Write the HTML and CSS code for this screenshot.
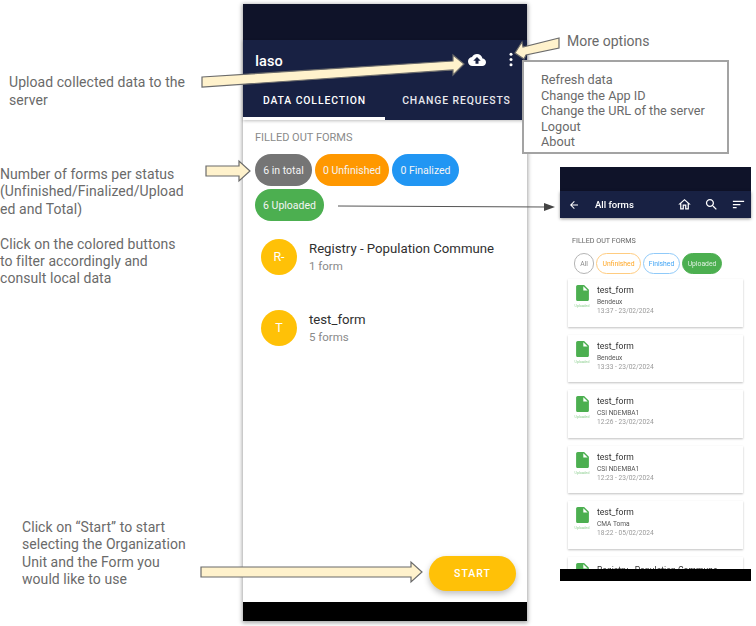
FILE: index.html
```html
<!DOCTYPE html>
<html lang="en">
<head>
<meta charset="utf-8">
<title>Iaso data collection</title>
<link rel="stylesheet" href="styles.css">
</head>
<body>
<main class="canvas">
  <p class="note note-upload">Upload collected data to the<br>server</p>
  <div class="note note-status">
    <p>Number of forms per status<br>(Unfinished/Finalized/Upload<br>ed and Total)</p>
    <p class="gap">Click on the colored buttons<br>to filter accordingly and<br>consult local data</p>
  </div>
  <p class="note note-start">Click on “Start” to start<br>selecting the Organization<br>Unit and the Form you<br>would like to use</p>
  <p class="note note-more">More options</p>

  <section class="phone">
    <div class="status"></div>
    <header class="appbar">
      <div class="bar-row">
        <span class="app-title">Iaso</span>
        <svg class="ic-cloud" viewBox="0 0 24 24"><path d="M19.35 10.04C18.67 6.59 15.64 4 12 4 9.11 4 6.6 5.64 5.35 8.04 2.34 8.36 0 10.91 0 14c0 3.31 2.69 6 6 6h13c2.76 0 5-2.24 5-5 0-2.64-2.05-4.78-4.65-4.96zM14 13v4h-4v-4H7l5-5 5 5h-3z"/></svg>
        <svg class="ic-kebab" viewBox="0 0 6 16"><circle cx="3" cy="2.5" r="1.6"/><circle cx="3" cy="8" r="1.6"/><circle cx="3" cy="13.5" r="1.6"/></svg>
      </div>
      <nav class="tabs">
        <span class="tab active">DATA COLLECTION</span>
        <span class="tab">CHANGE REQUESTS</span>
      </nav>
    </header>
    <div class="content">
      <h2 class="section">FILLED OUT FORMS</h2>
      <div class="chips">
        <span class="chip grey">6 in total</span>
        <span class="chip orange">0 Unfinished</span>
        <span class="chip blue">0 Finalized</span>
        <span class="chip green">6 Uploaded</span>
      </div>
      <ul class="forms">
        <li class="form"><span class="avatar">R-</span><div><div class="form-name">Registry - Population Commune</div><div class="form-count">1 form</div></div></li>
        <li class="form"><span class="avatar">T</span><div><div class="form-name">test_form</div><div class="form-count">5 forms</div></div></li>
      </ul>
      <button class="fab">START</button>
    </div>
    <div class="navbar"></div>
  </section>

  <section class="mini">
    <div class="mini-status"></div>
    <header class="mini-bar">
      <svg class="mi back" viewBox="0 0 24 24"><path d="M20 11H7.83l5.59-5.59L12 4l-8 8 8 8 1.41-1.41L7.83 13H20v-2z"/></svg>
      <span class="mini-title">All forms</span>
      <svg class="mi" viewBox="0 0 24 24"><path d="M12 5.69l5 4.5V18h-2v-6H9v6H7v-7.81l5-4.5M12 3L2 12h3v8h6v-6h2v6h6v-8h3L12 3z"/></svg>
      <svg class="mi" viewBox="0 0 24 24"><path d="M15.5 14h-.79l-.28-.27C15.41 12.59 16 11.11 16 9.5 16 5.91 13.09 3 9.5 3S3 5.91 3 9.5 5.91 16 9.5 16c1.61 0 3.09-.59 4.23-1.57l.27.28v.79l5 4.99L20.49 19l-4.99-5zm-6 0C7.01 14 5 11.99 5 9.5S7.01 5 9.5 5 14 7.01 14 9.5 11.99 14 9.5 14z"/></svg>
      <svg class="mi" viewBox="0 0 24 24"><path d="M3 18h6v-2H3v2zM3 6v2h18V6H3zm0 7h12v-2H3v2z"/></svg>
    </header>
    <div class="mini-body">
      <h3 class="mini-section">FILLED OUT FORMS</h3>
      <div class="mini-chips">
        <span class="mchip m-all">All</span>
        <span class="mchip m-unf">Unfinished</span>
        <span class="mchip m-fin">Finished</span>
        <span class="mchip m-upl">Uploaded</span>
      </div>
      <div class="cards">
        <article class="card"><div class="file"><svg viewBox="4 2 16 20"><path d="M6 2c-1.1 0-1.99.9-1.99 2L4 20c0 1.1.89 2 1.99 2H18c1.1 0 2-.9 2-2V8l-6-6H6zm7 7V3.5L18.5 9H13z"/></svg><span>Uploaded</span></div><div><div class="c-name">test_form</div><div class="c-org">Bendeux</div><div class="c-date">13:37 - 23/02/2024</div></div></article>
        <article class="card"><div class="file"><svg viewBox="4 2 16 20"><path d="M6 2c-1.1 0-1.99.9-1.99 2L4 20c0 1.1.89 2 1.99 2H18c1.1 0 2-.9 2-2V8l-6-6H6zm7 7V3.5L18.5 9H13z"/></svg><span>Uploaded</span></div><div><div class="c-name">test_form</div><div class="c-org">Bendeux</div><div class="c-date">13:33 - 23/02/2024</div></div></article>
        <article class="card"><div class="file"><svg viewBox="4 2 16 20"><path d="M6 2c-1.1 0-1.99.9-1.99 2L4 20c0 1.1.89 2 1.99 2H18c1.1 0 2-.9 2-2V8l-6-6H6zm7 7V3.5L18.5 9H13z"/></svg><span>Uploaded</span></div><div><div class="c-name">test_form</div><div class="c-org">CSI NDEMBA1</div><div class="c-date">12:26 - 23/02/2024</div></div></article>
        <article class="card"><div class="file"><svg viewBox="4 2 16 20"><path d="M6 2c-1.1 0-1.99.9-1.99 2L4 20c0 1.1.89 2 1.99 2H18c1.1 0 2-.9 2-2V8l-6-6H6zm7 7V3.5L18.5 9H13z"/></svg><span>Uploaded</span></div><div><div class="c-name">test_form</div><div class="c-org">CSI NDEMBA1</div><div class="c-date">12:23 - 23/02/2024</div></div></article>
        <article class="card"><div class="file"><svg viewBox="4 2 16 20"><path d="M6 2c-1.1 0-1.99.9-1.99 2L4 20c0 1.1.89 2 1.99 2H18c1.1 0 2-.9 2-2V8l-6-6H6zm7 7V3.5L18.5 9H13z"/></svg><span>Uploaded</span></div><div><div class="c-name">test_form</div><div class="c-org">CMA Toma</div><div class="c-date">18:22 - 05/02/2024</div></div></article>
        <article class="card card-cut"><div class="file"><svg viewBox="4 2 16 20"><path d="M6 2c-1.1 0-1.99.9-1.99 2L4 20c0 1.1.89 2 1.99 2H18c1.1 0 2-.9 2-2V8l-6-6H6zm7 7V3.5L18.5 9H13z"/></svg></div><div><div class="c-name">Registry - Population Commune</div></div></article>
      </div>
    </div>
    <div class="mini-nav"></div>
  </section>

  <aside class="menu">
    <div>Refresh data</div>
    <div>Change the App ID</div>
    <div>Change the URL of the server</div>
    <div>Logout</div>
    <div>About</div>
  </aside>

  <svg class="arrows" viewBox="0 0 756 626">
    <polygon class="callout" points="202,77 453,61 453,55 464,64 453,75 453,70 202,87"/>
    <polygon class="callout" points="559,38 523,47 522,42 515,53 524,59 526,55 559,48"/>
    <polygon class="callout" points="206,166 239,166 239,161 250,171 239,181 239,176 206,176"/>
    <polygon class="callout" points="201,567 411,567 411,562 422,572 411,582 411,577 201,577"/>
    <line class="pointer" x1="338" y1="206" x2="546" y2="207"/>
    <polygon class="pointer-head" points="555,207 544,203 544,211"/>
  </svg>
</main>
</body>
</html>
```
FILE: styles.css
```css
* { box-sizing: border-box; }
html, body { margin: 0; padding: 0; background: #fff; }
p, h2, h3, ul { margin: 0; padding: 0; }
.canvas { position: relative; width: 756px; height: 626px; overflow: hidden; font-family: Roboto, "Liberation Sans", sans-serif; }

/* Annotations */
.note { position: absolute; color: #6a6a6a; font-size: 14px; line-height: 17.4px; letter-spacing: .06px; font-family: Roboto, sans-serif; }
.note-upload { left: 9px; top: 73px; line-height: 18px; }
.note-status { left: 0; top: 166px; width: 190px; }
.note-status .gap { margin-top: 17.4px; }
.note-start { left: 22px; top: 519px; }
.note-more { left: 567px; top: 33px; letter-spacing: 0; }

/* Main phone */
.phone { position: absolute; left: 243px; top: 4px; width: 284px; height: 617px; display: flex; flex-direction: column; background: #fff; box-shadow: 0 1px 4px 1px rgba(0,0,0,.35); }
.status { height: 36px; background: #0f1329; flex: none; }
.appbar { height: 80px; flex: none; background: #182143; color: #fff; display: flex; flex-direction: column; justify-content: flex-end; box-shadow: 0 1px 3px rgba(0,0,0,.25); position: relative; }
.bar-row { display: flex; align-items: center; height: 40px; padding: 3px 12px 0 12px; }
.app-title { font-size: 14.5px; font-weight: 500; flex: 1; }
.ic-cloud { width: 18px; height: 18px; fill: #fff; margin-right: 22px; position: relative; top: -2px; }
.ic-kebab { width: 6px; height: 15px; fill: #fff; margin-right: 1px; position: relative; top: -2px; }
.tabs { display: flex; height: 40px; }
.tab { font-size: 10.4px; font-weight: 500; letter-spacing: .9px; display: flex; align-items: center; justify-content: center; width: 142px; white-space: nowrap; color: #e8e9ee; padding-left: 1px; }
.tab.active { box-shadow: inset 0 -3px 0 #fff; color: #fff; }
.content { flex: 1; position: relative; padding: 11px 12px 0; }
.section { font-size: 11px; font-weight: 400; color: #8a8a8a; line-height: 13px; }
.chips { display: flex; flex-wrap: wrap; gap: 3px; margin-top: 10px; }
.chip { height: 32px; border-radius: 16px; color: #f4f4f4; font-size: 10.5px; display: flex; align-items: center; justify-content: center; white-space: nowrap; }
.grey { background: #757575; width: 57px; }
.orange { background: #ff9800; width: 74px; }
.blue { background: #2196f3; width: 67px; }
.green { background: #4caf50; width: 69px; }
.forms { list-style: none; margin-top: 0; }
.form { display: flex; align-items: center; gap: 12px; height: 71px; padding-left: 6px; }
.avatar { width: 36px; height: 36px; border-radius: 50%; background: #ffc107; color: #fff; font-size: 12.5px; display: flex; align-items: center; justify-content: center; flex: none; }
.form-name { font-size: 13.2px; line-height: 18px; color: #303030; }
.form-count { font-size: 11.5px; line-height: 16px; color: #8a8a8a; }
.fab { position: absolute; left: 186px; top: 436px; width: 87px; height: 35px; border: 0; border-radius: 18px; background: #ffc107; color: #fff; font: 500 10.5px Roboto, sans-serif; letter-spacing: 1px; box-shadow: 0 3px 6px rgba(0,0,0,.25); }
.navbar { height: 19px; background: #000; flex: none; }

/* Small screenshot */
.mini { position: absolute; left: 560px; top: 167px; width: 191px; height: 414px; display: flex; flex-direction: column; filter: blur(.35px); background: #fff; }
.mini-status { height: 24px; background: #0f1329; flex: none; }
.mini-bar { height: 27px; flex: none; background: #182143; color: #fff; display: flex; align-items: center; gap: 12px; padding: 0 5px 0 8px; box-shadow: 0 1px 3px rgba(0,0,0,.4); position: relative; }
.mini-title { font-size: 9.5px; font-weight: 500; flex: 1; margin-left: 3px; }
.mi { width: 15px; height: 15px; fill: #fff; flex: none; }
.mi.back { width: 12px; height: 12px; }
.mini-body { flex: 1; overflow: hidden; padding: 0 8px; }
.mini-section { font-size: 7.2px; font-weight: 400; color: #666; margin: 18px 0 0 4px; line-height: 10px; }
.mini-chips { display: flex; gap: 2px; margin: 7px 0 0 6px; }
.mchip { height: 21px; border-radius: 11px; font-size: 6.8px; display: flex; align-items: center; justify-content: center; border: 1px solid; white-space: nowrap; }
.m-all { width: 20px; color: #8a8a8a; border-color: #b5b5b5; }
.m-unf { width: 45px; color: #ffa726; border-color: #ffcc80; }
.m-fin { width: 37px; color: #42a5f5; border-color: #90caf9; }
.m-upl { width: 40px; color: #dff0e0; background: #4caf50; border-color: #4caf50; }
.cards { display: flex; flex-direction: column; gap: 8px; margin-top: 5px; }
.card { height: 47.5px; flex: none; background: #fff; box-shadow: 0 1px 2px rgba(0,0,0,.25); display: flex; gap: 8px; padding: 6px 7px; }
.card-cut .c-name { margin-top: 2px; }
.file { width: 14px; flex: none; display: flex; flex-direction: column; align-items: center; }
.file svg { width: 13px; height: 16px; fill: #4caf50; }
.file span { font-size: 3.5px; color: #8fd092; margin-top: 3px; white-space: nowrap; }
.c-name { font-size: 8.6px; line-height: 11px; color: #333; }
.c-org { font-size: 6.6px; line-height: 10px; color: #555; margin-top: 1px; }
.c-date { font-size: 6.6px; line-height: 9px; color: #999; }
.mini-nav { height: 12px; background: #000; flex: none; position: relative; }

/* Menu box */
.menu { position: absolute; left: 522px; top: 60px; width: 207px; height: 94px; background: #fff; border: 2px solid #a3a3a3; padding: 10px 0 0 17px; color: #6a6a6a; font-size: 12.7px; line-height: 15.5px; }

/* Arrows */
.arrows { position: absolute; left: 0; top: 0; width: 756px; height: 626px; pointer-events: none; }
.callout { fill: #fff2cc; stroke: #6b6b6b; stroke-width: 1.2; }
.pointer { stroke: #555; stroke-width: 1; }
.pointer-head { fill: #444; }
```
